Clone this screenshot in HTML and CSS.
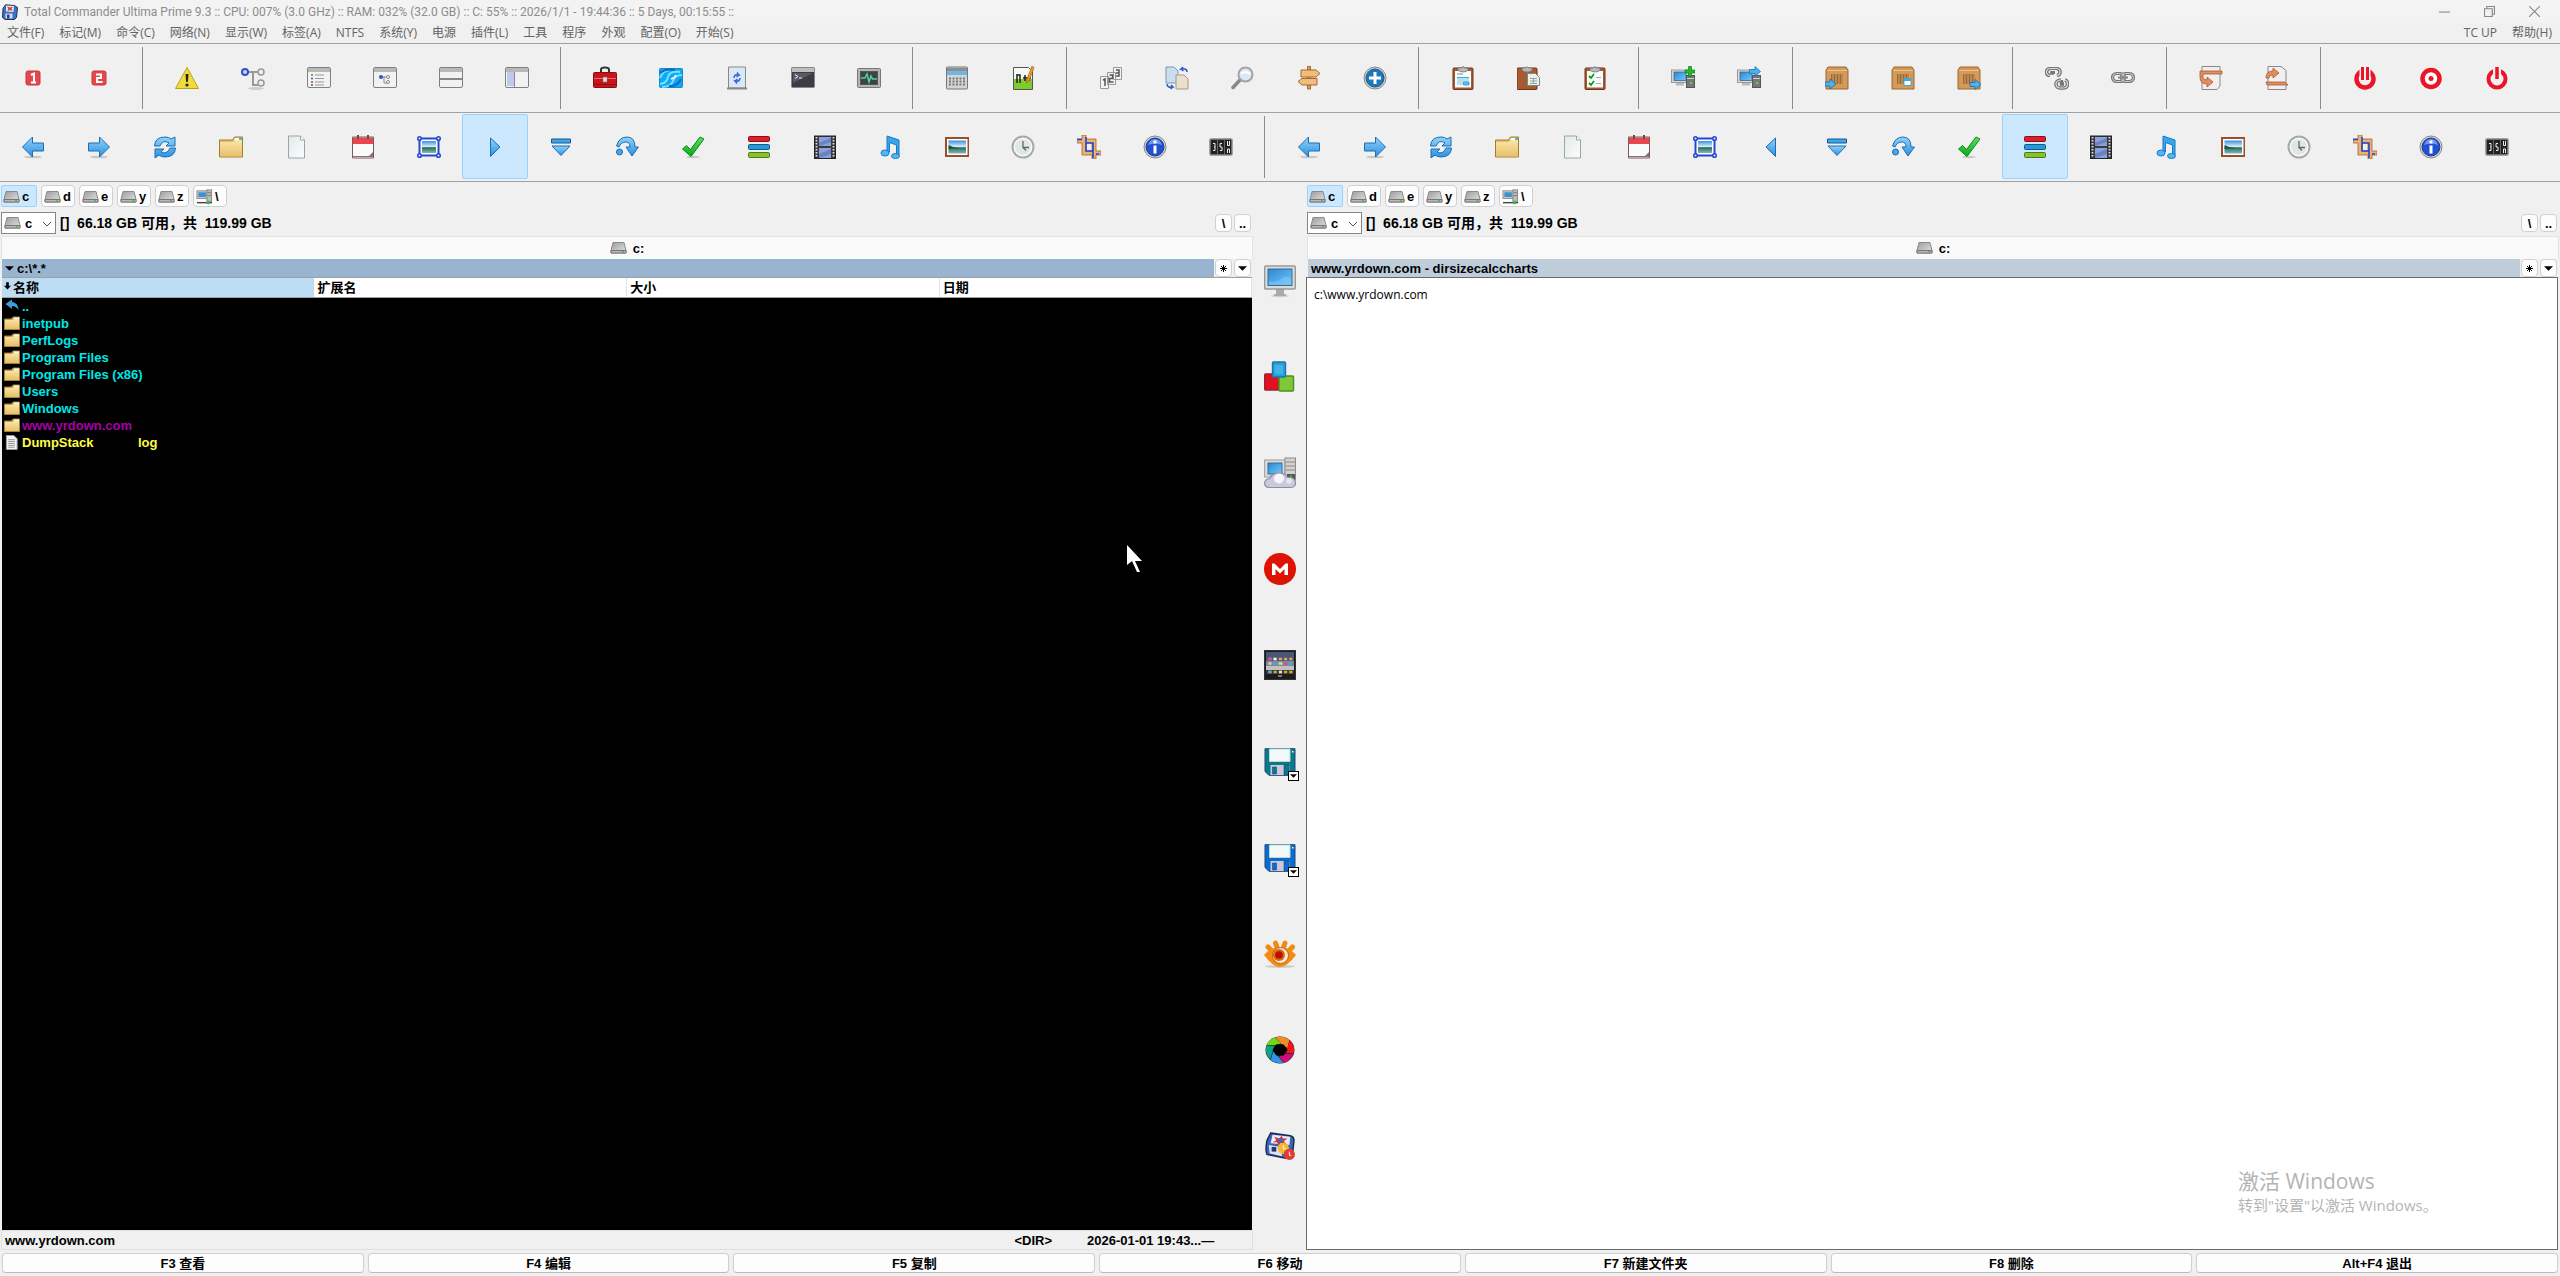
FILE: index.html
```html
<!DOCTYPE html>
<html lang="zh-CN">
<head>
<meta charset="utf-8">
<title>Total Commander Ultima Prime 9.3</title>
<link rel="stylesheet" href="styles.css">
</head>
<body>
<svg class="sprite" aria-hidden="true">
<defs>
<linearGradient id="gBlue" x1="0" y1="0" x2="0" y2="1"><stop offset="0" stop-color="#8fd4fb"/><stop offset="1" stop-color="#2b8fe0"/></linearGradient>
<linearGradient id="gFold" x1="0" y1="0" x2="0" y2="1"><stop offset="0" stop-color="#fbe6a8"/><stop offset="1" stop-color="#e6bf69"/></linearGradient>
<linearGradient id="gGray" x1="0" y1="0" x2="1" y2="1"><stop offset="0" stop-color="#9c9c9c"/><stop offset="1" stop-color="#e4e4e4"/></linearGradient>
<linearGradient id="gPaper" x1="0" y1="0" x2="1" y2="1"><stop offset="0" stop-color="#dfeaea"/><stop offset="1" stop-color="#fdfdfd"/></linearGradient>
<linearGradient id="gScreen" x1="0" y1="0" x2="1" y2="1"><stop offset="0" stop-color="#2f86c9"/><stop offset=".5" stop-color="#4da8e8"/><stop offset="1" stop-color="#7cc4f5"/></linearGradient>
<linearGradient id="gGreen" x1="0" y1="0" x2="0" y2="1"><stop offset="0" stop-color="#5be05f"/><stop offset="1" stop-color="#0ba716"/></linearGradient>
<linearGradient id="gPic" x1="0" y1="0" x2="0" y2="1"><stop offset="0" stop-color="#3c8fe0"/><stop offset=".5" stop-color="#e3f3fb"/><stop offset=".55" stop-color="#2b6b52"/><stop offset="1" stop-color="#7fb9c0"/></linearGradient>
</defs>
<symbol id="app" viewBox="0 0 16 16"><path d="M3.500.8l9 .7 3 2-1 10-2 2H3l-2.500-2 .5-9z" fill="#3d6fc4" stroke="#1c3568"/><path d="M4 1.500l8 .6-.5 6L4 7.500z" fill="#dfe6f4"/><path d="M5 2.500l3 1 3-.8-1.500 2L10.500 7 8 6 5.500 7l.8-2.200z" fill="#e03a2c"/><path d="M3.500 9.500h7v5h-7z" fill="#cfdcf2"/><path d="M5 10.500h2.500v4H5z" fill="#24427e"/></symbol>
<symbol id="one" viewBox="0 0 24 24"><rect x="5" y="5" width="14" height="14" rx="2" fill="#e4484c" stroke="#c93338"/><path d="M10 9l3-1.500v9M10 16.500h5" fill="none" stroke="#fff" stroke-width="2"/></symbol>
<symbol id="two" viewBox="0 0 24 24"><rect x="5" y="5" width="14" height="14" rx="2" fill="#e4484c" stroke="#c93338"/><path d="M9 8.500h5v3.500h-4v4h5.500" fill="none" stroke="#fff" stroke-width="2"/></symbol>
<symbol id="warn" viewBox="0 0 24 24"><path d="M12 1.500L23.500 22.500H.5z" fill="#f0dc38" stroke="#b9a21b"/><path d="M10.500 8h3l-.6 8h-1.800z" fill="#222"/><circle cx="12" cy="19" r="1.600" fill="#222"/></symbol>
<symbol id="tree" viewBox="0 0 24 24"><ellipse cx="15" cy="22.500" rx="8" ry="1.500" fill="#ccc"/><path d="M7 6h10M12 6v13h5" fill="none" stroke="#999" stroke-width="2"/><circle cx="4" cy="6" r="3" fill="#c9d5ff" stroke="#3452c0" stroke-width="2"/><circle cx="20" cy="6" r="3" fill="#eee" stroke="#999" stroke-width="1.500"/><circle cx="20" cy="17" r="3" fill="#eee" stroke="#999" stroke-width="1.500"/></symbol>
<symbol id="win" viewBox="0 0 24 24"><rect x=".5" y="1.500" width="23" height="20" rx="1.500" fill="#f2f2f2" stroke="#808080"/><rect x="1" y="2" width="22" height="4" fill="#b8b8b8"/></symbol>
<symbol id="wlist" viewBox="0 0 24 24"><use href="#win"/><path d="M8 9h9M8 12.500h9M8 16h9M8 19h9" stroke="#999"/><path d="M4 9h2" stroke="#3a9a3a" stroke-width="1.500"/><path d="M4 12.500h2" stroke="#3456c8" stroke-width="1.500"/><path d="M4 16h2" stroke="#c83434" stroke-width="1.500"/><path d="M4 19h2" stroke="#3456c8" stroke-width="1.500"/></symbol>
<symbol id="wtree" viewBox="0 0 24 24"><use href="#win"/><path d="M9 11h4M11 11v6h3" fill="none" stroke="#888"/><circle cx="8" cy="11" r="2" fill="#3452c0"/><circle cx="15" cy="11" r="1.500" fill="#fff" stroke="#888"/><circle cx="15" cy="16" r="1.500" fill="#fff" stroke="#888"/></symbol>
<symbol id="whor" viewBox="0 0 24 24"><use href="#win"/><path d="M1 13h22" stroke="#888" stroke-width="2"/></symbol>
<symbol id="wver" viewBox="0 0 24 24"><use href="#win"/><rect x="2" y="6" width="7" height="14" fill="#c0c9ea"/><path d="M9.500 6v15" stroke="#888"/></symbol>
<symbol id="toolbox" viewBox="0 0 24 24"><path d="M8 7V3.500Q8 1.500 12 1.500T16 3.500V7" fill="none" stroke="#333" stroke-width="2"/><rect x=".5" y="6.500" width="23" height="15" rx="1" fill="#c6161c" stroke="#8d0d12"/><path d="M1 12.500h22" stroke="#f26a6a"/><rect x="10" y="11" width="4" height="5" fill="#ddd" stroke="#777" stroke-width=".5"/><path d="M1 18.500h22" stroke="#8d0d12"/></symbol>
<symbol id="swirl" viewBox="0 0 24 24"><rect x=".5" y="2.500" width="23" height="19" rx="1" fill="#12a8f0" stroke="#1589c8"/><path d="M1 18Q8 17 9 11t12-5M3 21q9 0 11-6t9-6M1 12q2-7 10-8" fill="none" stroke="#70e4ff" stroke-width="2"/><path d="M12 13q4-1 5-4" fill="none" stroke="#fff" stroke-width="1.500"/><path d="M1 7Q7 2 16 4M10 20q8 1 12-7" fill="none" stroke="#0668d0" stroke-width="2"/></symbol>
<symbol id="sync" viewBox="0 0 24 24"><path d="M3.500 1h17v21h-17z" fill="#d8e8f6" stroke="#888"/><path d="M2 22.500h20" stroke="#888" stroke-width="2"/><path d="M9 12q0-4 5-3l-2-2.500M14 9l-2.500 2M15 12q0 4-5 3l2 2.500M10 15l2.500-2" fill="none" stroke="#3b64d8" stroke-width="1.500"/></symbol>
<symbol id="term" viewBox="0 0 24 24"><rect x=".5" y="1.500" width="23" height="20" rx="1" fill="#3c3c44" stroke="#888"/><rect x="1" y="2" width="22" height="4" fill="#bdbdbd"/><path d="M2 7h20L2 17z" fill="#5a5a66"/><path d="M4 8.500l3 2-3 2M8 12h3" fill="none" stroke="#eee"/></symbol>
<symbol id="mon" viewBox="0 0 24 24"><rect x=".5" y="2.500" width="23" height="19" rx="1" fill="#b5b5b5" stroke="#777"/><rect x="3.500" y="5.500" width="17" height="13" fill="#3a4440" stroke="#555"/><path d="M4 12h4l2-4 2 8 2-6 1.500 3H20" fill="none" stroke="#55d0a0" stroke-width="1.500"/></symbol>
<symbol id="calc" viewBox="0 0 24 24"><rect x="1.500" y="1" width="21" height="22" rx="1" fill="#d4d4d4" stroke="#777"/><path d="M2 2h20v3H2z" fill="#8e8e8e"/><path d="M2 5h20v4H2z" fill="#6cb8e4"/><path d="M4 12.500h17M4 15.500h17M4 18.500h17" stroke="#777" stroke-width="1.800" stroke-dasharray="2 1.500"/></symbol>
<symbol id="npp" viewBox="0 0 24 24"><path d="M2.500 1.500h15l4 4v18h-19z" fill="#f7faf2" stroke="#555"/><path d="M3 13h18v10H3z" fill="#7ecb2e"/><path d="M6 8v9M6 9h3v8M12 12h8M14 9v6M18 9v6" fill="none" stroke="#222" stroke-width="1.500"/><path d="M15.500 17l.5-4L21 0l2 1.500L18 15z" fill="#f0a228" stroke="#a05c10" stroke-width=".7"/></symbol>
<symbol id="nums" viewBox="0 0 24 24"><g fill="#f4f4f4" stroke="#999"><path d="M14.500 1.500h8v12h-8zM8.500 6.500h8v12h-8zM1.500 10.500h8v12h-8z"/></g><path d="M17 4h3v6h-3M17 7h3M10.500 9h3v3.500h-3V16h4M4 14l2-1v7" fill="none" stroke="#555" stroke-width="1.500"/></symbol>
<symbol id="swap" viewBox="0 0 24 24"><path d="M1 1h8l4 4v12H1z" fill="#c8def0" stroke="#8097ad"/><path d="M11 9h8l4 4v10H11z" fill="#e8dfcc" stroke="#a69980"/><path d="M22 6q0-4-6-3l2-2M16 3l2.500 2M2 18q0 4 6 3l-2-2M8 21l-2.500 2" fill="none" stroke="#3358d4" stroke-width="1.600"/></symbol>
<symbol id="mag" viewBox="0 0 24 24"><path d="M9 14L2 21.500" stroke="#888" stroke-width="3.500" stroke-linecap="round"/><circle cx="14.500" cy="8.500" r="7" fill="#d9e8f4" stroke="#a4a4a4" stroke-width="2"/><path d="M10 8q4-4 9 0" stroke="#fff" fill="none" stroke-width="2"/></symbol>
<symbol id="sign" viewBox="0 0 24 24"><path d="M10.500.5h3V23h-3z" fill="#d9a05e" stroke="#a46b2e"/><path d="M4 4h15l4 3.500L19 11H4zM20 12.500H5L1 15.500 5 19h15z" fill="#efbd7c" stroke="#a8692b"/></symbol>
<symbol id="plus" viewBox="0 0 24 24"><circle cx="12" cy="12" r="11" fill="#d0d0d0" stroke="#8a8a8a"/><circle cx="12" cy="12" r="9" fill="#1f78b8" stroke="#145a90"/><path d="M12 6v12M6 12h12" stroke="#fff" stroke-width="3"/></symbol>
<symbol id="clip" viewBox="0 0 24 24"><rect x="2" y="2" width="20" height="21.500" rx="1" fill="#a65a32" stroke="#6e3418"/><path d="M7 4V2h3q2-2.500 4 0h3v2q-1 2-5 2T7 4z" fill="#b9b9b9" stroke="#777" stroke-width=".8"/></symbol>
<symbol id="cliptab" viewBox="0 0 24 24"><use href="#clip"/><path d="M4 5h16v16.500H4z" fill="#f8fbfb"/><path d="M7 4V2h3q2-2.500 4 0h3v2q-1 2-5 2T7 4z" fill="#b9b9b9" stroke="#777" stroke-width=".8"/><path d="M6 8h6" stroke="#888"/><rect x="6" y="11" width="12" height="8" fill="#b9dff2"/><path d="M6 11.500h12M12.500 16h5.500v3h-5.500z" stroke="#38a8dc" fill="#64bce8"/></symbol>
<symbol id="clippaste" viewBox="0 0 24 24"><use href="#clip" x="-2"/><path d="M10.500 7.500h8l4 4v8h-12z" fill="#e7f0ee" stroke="#7c8a86"/><path d="M13 12.500h7M13 15h7M13 17.500h7M16.500 12v6" stroke="#8fa5a0"/></symbol>
<symbol id="clipcheck" viewBox="0 0 24 24"><use href="#clip"/><path d="M4 5h16v16.500H4z" fill="#f8fbfb"/><path d="M7 4V2h3q2-2.500 4 0h3v2q-1 2-5 2T7 4z" fill="#b9b9b9" stroke="#777" stroke-width=".8"/><path d="M6 10l2 2 3-4M6 17l2 2 3-4" fill="none" stroke="#0a9a16" stroke-width="1.800"/><path d="M13 11.500h5M13 17.500h5" stroke="#aaa"/></symbol>
<symbol id="pc" viewBox="0 0 24 24"><rect x=".5" y="4" width="17" height="12.500" fill="#d8d8d8" stroke="#999"/><rect x="3" y="6" width="12" height="8.500" fill="url(#gScreen)" stroke="#2a5d8c" stroke-width=".7"/><path d="M5 17h8v2.500H5z" fill="#bbb"/><rect x="15.500" y="9.500" width="8" height="12" fill="#777" stroke="#555"/><path d="M16 12.500h7" stroke="#ccc"/><circle cx="20" cy="17" r="1" fill="#4f4"/></symbol>
<symbol id="pcadd" viewBox="0 0 24 24"><use href="#pc"/><path d="M17.500.5h3v3.500H24v3h-3.500v3.500h-3V7H14V4h3.500z" fill="#22b82c" stroke="#0c8517" stroke-width=".7"/></symbol>
<symbol id="pcgo" viewBox="0 0 24 24"><use href="#pc"/><path d="M12.500 3.500h5.500V.5l5.500 5-5.500 5v-3h-5.500z" fill="#4cb0f0" stroke="#1f72b4" stroke-width=".8"/></symbol>
<symbol id="crate" viewBox="0 0 24 24"><path d="M3 1h18l2 3v19H1V4z" fill="#d39a58" stroke="#9a6530"/><path d="M2 4.500h20" stroke="#ecc18c"/><path d="M6 8h12v10H6z" fill="#9c6a38"/><path d="M8 8v10M11 8v10M14 8v10M17 8v10" stroke="#d8a566"/></symbol>
<symbol id="cratein" viewBox="0 0 24 24"><use href="#crate"/><path d="M0 16h5v-3l6 5-6 5v-3H0z" fill="#4ab4f2" stroke="#1a6aae" stroke-width=".8"/></symbol>
<symbol id="cratetab" viewBox="0 0 24 24"><use href="#crate"/><rect x="13" y="12.500" width="7" height="7" fill="#fff" stroke="#44a8dc"/><path d="M13 14h7" stroke="#44a8dc" stroke-width="2"/></symbol>
<symbol id="crateout" viewBox="0 0 24 24"><use href="#crate"/><path d="M13 16.500h5v-3l6 5-6 5v-3h-5z" fill="#4ab4f2" stroke="#1a6aae" stroke-width=".8"/></symbol>
<symbol id="unlink" viewBox="0 0 24 24"><path id="lnk" d="M5 9.500Q1.500 9 1.500 6T5 2.500h6.500q3.500.5 3.500 3.500t-3 3.500M7 8.500V6.500h3M16 14q-5 .5-5 4t4 4h4q3.500-.5 3.500-4T20 14M16.500 14v4H19" fill="none" stroke="#747474" stroke-width="3.200"/><use href="#lnk"/><path d="M5 9.500Q1.500 9 1.500 6T5 2.500h6.500q3.500.5 3.500 3.500t-3 3.500M16 14q-5 .5-5 4t4 4h4q3.500-.5 3.500-4T20 14" fill="none" stroke="#dcdcdc" stroke-width="1.200"/></symbol>
<symbol id="link" viewBox="0 0 24 24"><rect x="1.500" y="7.500" width="12" height="8" rx="4" fill="none" stroke="#747474" stroke-width="3.200"/><rect x="10.500" y="7.500" width="12" height="8" rx="4" fill="none" stroke="#747474" stroke-width="3.200"/><rect x="1.500" y="7.500" width="12" height="8" rx="4" fill="none" stroke="#d4d4d4"/><rect x="10.500" y="7.500" width="12" height="8" rx="4" fill="none" stroke="#d4d4d4"/><path d="M7 11.500h10" stroke="#888" stroke-width="2"/></symbol>
<symbol id="docdown" viewBox="0 0 24 24"><path d="M3 .5h18V20l-3 3.500H3z" fill="#f2eff2" stroke="#888"/><path d="M1 5h22v3H4v3q0 3 4 3v-3l6 5-6 5v-3q-7 0-7-7z" fill="#e0905c" stroke="#a85a2c" stroke-width=".8"/></symbol>
<symbol id="docup" viewBox="0 0 24 24"><path d="M3 .5h13l5 4V23.500H3z" fill="#f2eff2" stroke="#888"/><path d="M1 12q0-7 7-7V2l6 5-6 5V9q-4 0-4 3zM1 16h19l3 3H2z" fill="#e0905c" stroke="#a85a2c" stroke-width=".8"/></symbol>
<symbol id="pause" viewBox="0 0 24 24"><circle cx="12" cy="13" r="8.500" fill="none" stroke="#ea1526" stroke-width="4.500"/><path d="M6.500 1h11v14h-11z" fill="#f0f0f0"/><path d="M9.500 1v13M14.500 1v13" stroke="#ea1526" stroke-width="3"/></symbol>
<symbol id="rec" viewBox="0 0 24 24"><circle cx="12" cy="12.500" r="8.500" fill="#fff" stroke="#ea1526" stroke-width="4.500"/><circle cx="12" cy="12.500" r="2.500" fill="#ea1526"/></symbol>
<symbol id="power" viewBox="0 0 24 24"><circle cx="12" cy="13" r="8.500" fill="none" stroke="#ea1526" stroke-width="4"/><path d="M8 1h8v12H8z" fill="#f0f0f0"/><path d="M12 1v12" stroke="#ea1526" stroke-width="3.500"/></symbol>
<symbol id="left" viewBox="0 0 24 24"><ellipse cx="12" cy="22" rx="9" ry="1.300" fill="#c8c8c8"/><path d="M1.500 12L11.500 2v6h11v8h-11v6z" fill="url(#gBlue)" stroke="#1d6cb4"/></symbol>
<symbol id="right" viewBox="0 0 24 24"><ellipse cx="12" cy="22" rx="9" ry="1.300" fill="#c8c8c8"/><path d="M22.500 12L12.500 2v6h-11v8h11v6z" fill="url(#gBlue)" stroke="#1d6cb4"/></symbol>
<symbol id="refresh" viewBox="0 0 24 24"><path d="M1.500 11Q2 2 12 2q4 0 6 2l4-2v9h-9l3-3q-6-4-9 3zM22.500 13Q22 22 12 22q-4 0-6-2l-4 3v-9h9l-3 3q6 3 9-4z" fill="url(#gBlue)" stroke="#1d6cb4"/></symbol>
<symbol id="folder" viewBox="0 0 24 24"><path d="M.5 5h13l2-3h8v20H.5z" fill="#e3bd6c" stroke="#a57d30"/><path d="M16 3h7v2h-8z" fill="#fff"/><path d="M20 3h3v2h-3z" fill="#45b4ee"/><path d="M1 7h13l2-2h7v16.500H1z" fill="url(#gFold)"/></symbol>
<symbol id="file" viewBox="0 0 24 24"><path d="M3.500 1h12l4 4v18h-16z" fill="url(#gPaper)" stroke="#9aa6a6"/><path d="M15.500 1v4h4" fill="#fff" stroke="#9aa6a6"/></symbol>
<symbol id="cal" viewBox="0 0 24 24"><path d="M1.500 2h21v21h-21z" fill="#fafafa" stroke="#7c5a5a"/><path d="M2 2.500h20V9H2z" fill="#e8474d"/><path d="M7 0v4M17 0v4" stroke="#555" stroke-width="2"/><path d="M2 22h20v-5l-4 4H2z" fill="#8c6f72"/></symbol>
<symbol id="sel" viewBox="0 0 24 24"><rect x="2.500" y="3.500" width="19" height="17" fill="#fff" stroke="#2447cc" stroke-width="2"/><rect x="5" y="6" width="14" height="12" fill="url(#gPic)"/><g fill="#dfe6ff" stroke="#2447cc" stroke-width="1.500"><circle cx="2.500" cy="3.500" r="1.800"/><circle cx="21.500" cy="3.500" r="1.800"/><circle cx="2.500" cy="20.500" r="1.800"/><circle cx="21.500" cy="20.500" r="1.800"/></g></symbol>
<symbol id="play" viewBox="0 0 24 24"><path d="M7.500 3L17 12 7.500 21.500z" fill="url(#gBlue)" stroke="#1d6cb4"/></symbol>
<symbol id="back" viewBox="0 0 24 24"><path d="M16.500 3L7 12l9.500 9.500z" fill="url(#gBlue)" stroke="#1d6cb4"/></symbol>
<symbol id="down" viewBox="0 0 24 24"><path d="M2.500 4h19v4h-19z" fill="#3aa6ec" stroke="#1b568e"/><path d="M3 11h18l-9 9.500z" fill="url(#gBlue)" stroke="#1d6cb4"/></symbol>
<symbol id="jump" viewBox="0 0 24 24"><path d="M1.500 11Q4 2 12 2t8 10h3.500L17 21l-6-9h4q0-5-4-5-5 0-7 5z" fill="url(#gBlue)" stroke="#1d6cb4"/><circle cx="4.500" cy="17" r="3" fill="#45a8ec" stroke="#1d6cb4"/></symbol>
<symbol id="check" viewBox="0 0 24 24"><ellipse cx="12" cy="22" rx="7" ry="1.200" fill="#c8c8c8"/><path d="M1.500 14l4-3.500 4 4L19 2l4 2L10 21.500z" fill="url(#gGreen)" stroke="#0b8a14"/></symbol>
<symbol id="bars" viewBox="0 0 24 24"><rect x="1.500" y="1.500" width="21" height="5" rx="1" fill="#dd1f2d" stroke="#8d1017"/><rect x="1.500" y="9.500" width="21" height="5" rx="1" fill="#249bd8" stroke="#125d8c"/><rect x="1.500" y="17.500" width="21" height="5" rx="1" fill="#86c12e" stroke="#4c7a14"/></symbol>
<symbol id="film" viewBox="0 0 24 24"><rect x="1.500" y="1" width="21" height="22.500" fill="#3a3a3e" stroke="#222"/><path d="M3.500 2v21M20.500 2v21" stroke="#ddd" stroke-width="1.800" stroke-dasharray="1.500 1.500"/><path d="M6 2h12v9H6zM6 13h12v10H6z" fill="#8aa0d8"/><path d="M6 8l12-5v4L6 11zM6 19l12-5v5L6 23z" fill="#6a82c2"/></symbol>
<symbol id="note" viewBox="0 0 24 24"><path d="M8 1l12 4v15h-2.500V10L10.500 7.500V17H8z" fill="#35a5ee" stroke="#1b79c0"/><ellipse cx="6" cy="18" rx="4" ry="3" fill="#4fb8f6" stroke="#1b79c0"/><ellipse cx="16.500" cy="21" rx="4" ry="2.500" fill="#4fb8f6" stroke="#1b79c0"/></symbol>
<symbol id="pic" viewBox="0 0 24 24"><rect x="1" y="3" width="22.500" height="18" fill="#fff" stroke="#984f2c" stroke-width="2"/><rect x="3.500" y="5.500" width="17.500" height="13" fill="url(#gPic)"/><path d="M3.500 10q5 3 11 3l-11 1z" fill="#19553e"/></symbol>
<symbol id="clock" viewBox="0 0 24 24"><circle cx="12" cy="12" r="10.500" fill="#f0f4f1" stroke="#a9a9a9" stroke-width="2"/><circle cx="12" cy="12" r="8.500" fill="#dde8e2" stroke="#fff"/><path d="M12 6v6.500h6M12 12.500l3 3" fill="none" stroke="#666" stroke-width="1.300"/></symbol>
<symbol id="crop" viewBox="0 0 24 24"><path fill-rule="evenodd" d="M5 0h4v4h10v12h5v4h-5v4h-4v-4H5V8H0V4h5zM9 8v8h6V8z" fill="#eeb06c" stroke="#a3662c" stroke-width=".8"/><path d="M9 2v14h7V8H9M0 4.500h5M16 15v8M22 19h-3" fill="none" stroke="#1e48d8" stroke-width="1.600"/></symbol>
<symbol id="info" viewBox="0 0 24 24"><circle cx="12" cy="12" r="11" fill="#d9d9d9" stroke="#888"/><circle cx="12" cy="12" r="9" fill="#2250d0" stroke="#163a9c"/><path d="M5 10q2-6 7-6t7 6q-7-3-14 0z" fill="#7397ee"/><path d="M12 5.500v3M12 10.500v8" stroke="#fff" stroke-width="3"/></symbol>
<symbol id="count" viewBox="0 0 24 24"><rect x="1" y="4" width="22" height="16" rx="1" fill="#222" stroke="#8a8a8a" stroke-width="1.500"/><path d="M8.500 5v14M15.500 5v14" stroke="#666"/><path d="M4 8.500h2v7H4M5 12h1M13 8.500h-2V12h2v3.500h-2M18.500 6v4.500h2V6M18.500 18v-4h2v4" fill="none" stroke="#eee"/></symbol>
<symbol id="drive" viewBox="0 0 17 12"><path d="M3 .5h11l2 8v2.500H1V8.500z" fill="url(#gGray)" stroke="#8a8a8a"/><path d="M1 8.500h15v2.500H1z" fill="#b9b9b9" stroke="#767676"/><path d="M12 9.700h2" stroke="#3ec43e" stroke-width="1.500"/></symbol>
<symbol id="netdrive" viewBox="0 0 18 16"><rect x="1" y="1.500" width="11" height="8" fill="#cfcfcf" stroke="#888"/><rect x="2.500" y="3" width="8" height="5" fill="#3d90d2"/><rect x="11.500" y=".5" width="5" height="12" fill="#bdbdbd" stroke="#888"/><path d="M12 3.500h4M12 6.500h4" stroke="#777"/><path d="M1 14h16" stroke="#444" stroke-width="1.500"/><circle cx="13" cy="14" r="1.800" fill="#27c23a"/></symbol>
<symbol id="updir" viewBox="0 0 14 12"><path d="M.5 5L7 .5V3q6 .5 6.500 8Q11 7 7 7v3z" fill="#3aa0e4"/></symbol>
<symbol id="sfold" viewBox="0 0 16 14"><path d="M.5 2.500h7L9 .5h6.500v12.500H.5z" fill="#dcb462" stroke="#a88038"/><path d="M10 1h5v2h-5z" fill="#f5f8fa"/><path d="M1 3.500h8l1-1h5v10H1z" fill="url(#gFold)"/></symbol>
<symbol id="stext" viewBox="0 0 16 16"><path d="M2 .5h8L13.500 4v11.500H2z" fill="#f4f4f4" stroke="#999"/><path d="M4 5h7M4 7h7M4 9h7M4 11h7M4 13h7" stroke="#777" stroke-width=".8"/></symbol>
<symbol id="display" viewBox="0 0 32 32"><ellipse cx="16" cy="31" rx="9" ry="1" fill="#ccc"/><path d="M12 24h8v5h2v2H10v-2h2z" fill="#aaa"/><rect x=".7" y="1" width="30.600" height="23" rx="1" fill="#dcdcdc" stroke="#999" stroke-width="1.400"/><rect x="4" y="4" width="24" height="16.500" fill="url(#gScreen)" stroke="#2e6d9e"/><path d="M5 16q8 2 12-2t10-1v7H5z" fill="#82c6f4" opacity=".6"/></symbol>
<symbol id="cubes" viewBox="0 0 32 32"><rect x=".7" y="13" width="14.500" height="16" rx="1" fill="#e01022" stroke="#a02028" stroke-width="1.400"/><rect x="15" y="15" width="14.500" height="15" rx="1" fill="#80c838" stroke="#4c8c1c" stroke-width="1.400"/><rect x="8.500" y="1" width="13" height="15" rx="1" fill="#2aa0d8" stroke="#1b76a6" stroke-width="1.400"/><path d="M11 4h8v9h-8z" fill="#3fb4e8"/></symbol>
<symbol id="cloudpc" viewBox="0 0 32 32"><rect x="21" y="1" width="10.500" height="22" fill="#d2d2d2" stroke="#8a8a8a"/><path d="M22 5h9M22 9h9M22 13h9" stroke="#888"/><path d="M23 17h8v7h-8z" fill="#555"/><circle cx="27" cy="19" r="1" fill="#2d2"/><rect x=".7" y="3" width="20" height="17" fill="#ddd" stroke="#999"/><rect x="4" y="6" width="14" height="11" fill="url(#gScreen)" stroke="#2e6d9e"/><path d="M5 30.500C-1 30.500-1 22 6 21.500C7 15 21 14 23.500 20.500C33 19 34 30.500 27 30.500z" fill="#c9c9dc" stroke="#8c8ca8" stroke-width="1.200"/><circle cx="15" cy="21.500" r="5" fill="#f6f6fa"/><circle cx="25" cy="24" r="3" fill="#e4e4ee"/></symbol>
<symbol id="mega" viewBox="0 0 32 32"><circle cx="16" cy="16" r="16" fill="#dd1405"/><path d="M8 22V10.500h2.500l5.500 5.500 5.500-5.500H24V22h-3.500v-6L16 20.500 11.500 16v6z" fill="#fff"/></symbol>
<symbol id="tablet" viewBox="0 0 32 30"><rect x=".5" y=".5" width="31" height="29" fill="#1b1b1d" stroke="#333"/><path d="M2 2h28v12H2z" fill="#4a5877"/><path d="M2 11h28v6H2z" fill="#7c88a2"/><path d="M2 16h28v4H2z" fill="#c4c0be"/><path d="M2 20h28v4H2z" fill="#3a3840"/><g stroke-width="2.500"><path d="M4.500 9h24" stroke="#e8a848" stroke-dasharray="3 2.200"/><path d="M4.500 9h3M20 13.500h3" stroke="#e040b0"/><path d="M9.500 9h3" stroke="#f4f4f4"/><path d="M4.500 13.500h3M14.500 13.500h4" stroke="#e8d488"/><path d="M9.500 13.500h3M25 13.500h3" stroke="#48a8d8"/><path d="M4.500 22h24" stroke="#d8b020" stroke-dasharray="3 2.200"/><path d="M4.500 22h3" stroke="#48a8e8"/><path d="M15 22h3" stroke="#d8e8d0"/></g><path d="M14 26h4" stroke="#777" stroke-width="2"/></symbol>
<symbol id="flop" viewBox="0 0 32 28"><path d="M1 .7h30v26.600H5L1 23.500z" fill="currentColor" stroke="#20467c"/><path d="M5.500 1h20.500v12.500h-20.500z" fill="#f2f8f8" stroke="#b8dcd0"/><path d="M6.500 17h19v10h-19z" fill="#c9c9da"/><path d="M8.500 19h4v7h-4zM20 17h5v10h-5z" fill="currentColor" stroke="#20467c" stroke-width=".6"/><path d="M28 3h1.500v1.500H28z" fill="#fff"/></symbol>
<symbol id="eye" viewBox="0 0 32 28"><ellipse cx="16" cy="26.500" rx="15" ry="1.500" fill="#ccc"/><path d="M4 7l5 5M11.500 3l2 6M21 3l-2 6M28.500 7l-5 5" stroke="#f08a10" stroke-width="5" stroke-linecap="round"/><path d="M0 15l3-3q13-10 26 0l3 3Q23 27 16 27T0 15z" fill="#f28c12"/><circle cx="16.500" cy="15.500" r="8" fill="#f7e8dd" stroke="#c85c0c"/><circle cx="15" cy="15" r="6" fill="#e0680e"/><circle cx="15" cy="15" r="3.800" fill="#b81206"/></symbol>
<symbol id="shutter" viewBox="0 0 32 30"><ellipse cx="16" cy="15" rx="15.500" ry="14.500" fill="#222"/><path d="M11 1.500Q19-1 26 4L24 13 17 8z" fill="#f08a2c"/><path d="M26.500 4.500Q33 11 30.500 19L22 18 24 12z" fill="#f01818"/><path d="M30.300 19.500Q27 27 20 29L15 22 22 19z" fill="#cc0e7c"/><path d="M19.500 29Q11 30 6 25.500L9 16 15 23z" fill="#2e96e8"/><path d="M5.500 25Q-1 18 1.500 10.500L10 11 8 17z" fill="#12a088"/><path d="M1.700 10Q4 4 10.500 1.500L17 8 10 10z" fill="#72d818"/><path d="M12 9h8l4 6-4 6h-8l-4-6z" fill="#000"/></symbol>
<symbol id="tcup" viewBox="0 0 32 30"><path d="M6 1l21 3q4 1 4 5l-2 19-8 0L2 24Q0 20 2 9z" fill="#3b63b8" stroke="#18284c" stroke-width="1.500"/><path d="M8 3l19 2-1 9-20-2z" fill="#e6ecf8"/><path d="M10 5l5 2 3-3 1 3 5 0-4 3 3 3-6-1-3 2-1-3-5 0 4-2z" fill="#e03022"/><path d="M14 7h5v4h-5z" fill="#2d6ad8"/><path d="M4 14l14 2v10L5 23z" fill="#dbe4f4"/><path d="M7 16h5v5H7z" fill="#24386c"/><circle cx="19.500" cy="17.500" r="6" fill="#f8b62c"/><circle cx="26" cy="24" r="6" fill="#e23a34"/><path d="M19.500 14v4h3M26 21v4h2" fill="none" stroke="#fff"/></symbol>
<symbol id="chev" viewBox="0 0 10 6"><path d="M1 1l4 4 4-4" fill="none" stroke="#555"/></symbol>
<symbol id="tri" viewBox="0 0 10 5"><path d="M0 0h10L5 5z"/></symbol>
<symbol id="star" viewBox="0 0 9 9"><path d="M4.500 1v7M1 4.500h7M2 2l5 5M7 2L2 7" stroke="#000"/></symbol>
<symbol id="sort" viewBox="0 0 8 10"><path d="M2.500 0h3v4H8L4 8.500 0 4h2.500z"/></symbol>
<symbol id="mouse" viewBox="0 0 16 28"><path d="M0 0v20l5-4 5 11h3L8 16h7z" fill="#fff"/></symbol>
</svg>

<header class="titlebar">
  <svg class="appicon"><use href="#app"/></svg>
  <span class="caption">Total Commander Ultima Prime 9.3 :: CPU: 007% (3.0 GHz) :: RAM: 032% (32.0 GB) :: C: 55% :: 2026/1/1 - 19:44:36 :: 5 Days, 00:15:55 ::</span>
  <div class="winbtns">
    <button aria-label="最小化"><svg viewBox="0 0 10 10"><path d="M0 5.500h10" stroke="#888"/></svg></button>
    <button aria-label="还原"><svg viewBox="0 0 10 10"><path d="M.5 2.500h7v7h-7zM2.500 2V.5h7v7H8" fill="none" stroke="#888"/></svg></button>
    <button aria-label="关闭"><svg viewBox="0 0 10 10"><path d="M0 0l10 10M10 0L0 10" stroke="#888"/></svg></button>
  </div>
</header>

<nav class="menubar">
  <button>文件(F)</button><button>标记(M)</button><button>命令(C)</button><button>网络(N)</button><button>显示(W)</button><button>标签(A)</button><button>NTFS</button><button>系统(Y)</button><button>电源</button><button>插件(L)</button><button>工具</button><button>程序</button><button>外观</button><button>配置(O)</button><button>开始(S)</button>
  <button class="push">TC UP</button><button>帮助(H)</button>
</nav>

<div class="toolbar">
  <button><svg><use href="#one"/></svg></button><button><svg><use href="#two"/></svg></button>
  <i></i>
  <button><svg><use href="#warn"/></svg></button><button><svg><use href="#tree"/></svg></button><button><svg><use href="#wlist"/></svg></button><button><svg><use href="#wtree"/></svg></button><button><svg><use href="#whor"/></svg></button><button><svg><use href="#wver"/></svg></button>
  <i></i>
  <button><svg><use href="#toolbox"/></svg></button><button><svg><use href="#swirl"/></svg></button><button><svg><use href="#sync"/></svg></button><button><svg><use href="#term"/></svg></button><button><svg><use href="#mon"/></svg></button>
  <i></i>
  <button><svg><use href="#calc"/></svg></button><button><svg><use href="#npp"/></svg></button>
  <i></i>
  <button><svg><use href="#nums"/></svg></button><button><svg><use href="#swap"/></svg></button><button><svg><use href="#mag"/></svg></button><button><svg><use href="#sign"/></svg></button><button><svg><use href="#plus"/></svg></button>
  <i></i>
  <button><svg><use href="#cliptab"/></svg></button><button><svg><use href="#clippaste"/></svg></button><button><svg><use href="#clipcheck"/></svg></button>
  <i></i>
  <button><svg><use href="#pcadd"/></svg></button><button><svg><use href="#pcgo"/></svg></button>
  <i></i>
  <button><svg><use href="#cratein"/></svg></button><button><svg><use href="#cratetab"/></svg></button><button><svg><use href="#crateout"/></svg></button>
  <i></i>
  <button><svg><use href="#unlink"/></svg></button><button><svg><use href="#link"/></svg></button>
  <i></i>
  <button><svg><use href="#docdown"/></svg></button><button><svg><use href="#docup"/></svg></button>
  <i></i>
  <button><svg><use href="#pause"/></svg></button><button><svg><use href="#rec"/></svg></button><button><svg><use href="#power"/></svg></button>
</div>

<div class="toolbar">
  <button><svg><use href="#left"/></svg></button><button><svg><use href="#right"/></svg></button><button><svg><use href="#refresh"/></svg></button><button><svg><use href="#folder"/></svg></button><button><svg><use href="#file"/></svg></button><button><svg><use href="#cal"/></svg></button><button><svg><use href="#sel"/></svg></button><button class="on"><svg><use href="#play"/></svg></button><button><svg><use href="#down"/></svg></button><button><svg><use href="#jump"/></svg></button><button><svg><use href="#check"/></svg></button><button><svg><use href="#bars"/></svg></button><button><svg><use href="#film"/></svg></button><button><svg><use href="#note"/></svg></button><button><svg><use href="#pic"/></svg></button><button><svg><use href="#clock"/></svg></button><button><svg><use href="#crop"/></svg></button><button><svg><use href="#info"/></svg></button><button><svg><use href="#count"/></svg></button>
  <i></i>
  <button><svg><use href="#left"/></svg></button><button><svg><use href="#right"/></svg></button><button><svg><use href="#refresh"/></svg></button><button><svg><use href="#folder"/></svg></button><button><svg><use href="#file"/></svg></button><button><svg><use href="#cal"/></svg></button><button><svg><use href="#sel"/></svg></button><button><svg><use href="#back"/></svg></button><button><svg><use href="#down"/></svg></button><button><svg><use href="#jump"/></svg></button><button><svg><use href="#check"/></svg></button><button class="on"><svg><use href="#bars"/></svg></button><button><svg><use href="#film"/></svg></button><button><svg><use href="#note"/></svg></button><button><svg><use href="#pic"/></svg></button><button><svg><use href="#clock"/></svg></button><button><svg><use href="#crop"/></svg></button><button><svg><use href="#info"/></svg></button><button><svg><use href="#count"/></svg></button>
</div>

<main class="main">
  <section class="panel">
    <div class="drives">
      <button class="on"><svg><use href="#drive"/></svg>c</button><button><svg><use href="#drive"/></svg>d</button><button><svg><use href="#drive"/></svg>e</button><button><svg><use href="#drive"/></svg>y</button><button><svg><use href="#drive"/></svg>z</button><button><svg class="net"><use href="#netdrive"/></svg>\</button>
    </div>
    <div class="inforow">
      <div class="combo"><svg class="drv"><use href="#drive"/></svg><select aria-label="左侧驱动器"><option>c</option></select><svg class="chev"><use href="#chev"/></svg></div>
      <span class="free">[]&nbsp; 66.18 GB 可用，共&nbsp; 119.99 GB</span>
      <div class="minis"><button>\</button><button>..</button></div>
    </div>
    <div class="tabs"><svg class="drv"><use href="#drive"/></svg>c:</div>
    <div class="pathrow">
      <div class="path active"><svg class="tri"><use href="#tri"/></svg>c:\*.*</div>
      <div class="minis"><button aria-label="收藏"><svg class="star"><use href="#star"/></svg></button><button aria-label="历史"><svg class="tri"><use href="#tri"/></svg></button></div>
    </div>
    <div class="list">
      <table>
        <thead><tr><th class="sorted"><svg><use href="#sort"/></svg>名称</th><th>扩展名</th><th>大小</th><th>日期</th></tr></thead>
        <tbody>
          <tr><td colspan="4"><svg class="up"><use href="#updir"/></svg>..</td></tr>
          <tr><td colspan="4"><svg><use href="#sfold"/></svg>inetpub</td></tr>
          <tr><td colspan="4"><svg><use href="#sfold"/></svg>PerfLogs</td></tr>
          <tr><td colspan="4"><svg><use href="#sfold"/></svg>Program Files</td></tr>
          <tr><td colspan="4"><svg><use href="#sfold"/></svg>Program Files (x86)</td></tr>
          <tr><td colspan="4"><svg><use href="#sfold"/></svg>Users</td></tr>
          <tr><td colspan="4"><svg><use href="#sfold"/></svg>Windows</td></tr>
          <tr class="marked"><td colspan="4"><svg><use href="#sfold"/></svg>www.yrdown.com</td></tr>
          <tr class="log"><td colspan="4"><svg><use href="#stext"/></svg><span class="stem">DumpStack</span>log</td></tr>
        </tbody>
      </table>
      <svg class="mouse"><use href="#mouse"/></svg>
    </div>
    <div class="status"><span>www.yrdown.com</span><span class="dir">&lt;DIR&gt;</span><span class="date">2026-01-01 19:43...—</span></div>
  </section>

  <nav class="vbar">
    <button><svg><use href="#display"/></svg></button>
    <button><svg><use href="#cubes"/></svg></button>
    <button><svg><use href="#cloudpc"/></svg></button>
    <button><svg><use href="#mega"/></svg></button>
    <button><svg><use href="#tablet"/></svg></button>
    <button class="teal"><svg class="short"><use href="#flop"/></svg><span class="drop"><svg><use href="#tri"/></svg></span></button>
    <button class="blue"><svg class="short"><use href="#flop"/></svg><span class="drop"><svg><use href="#tri"/></svg></span></button>
    <button><svg class="short"><use href="#eye"/></svg></button>
    <button><svg class="short"><use href="#shutter"/></svg></button>
    <button><svg class="short"><use href="#tcup"/></svg></button>
  </nav>

  <section class="panel">
    <div class="drives">
      <button class="on"><svg><use href="#drive"/></svg>c</button><button><svg><use href="#drive"/></svg>d</button><button><svg><use href="#drive"/></svg>e</button><button><svg><use href="#drive"/></svg>y</button><button><svg><use href="#drive"/></svg>z</button><button><svg class="net"><use href="#netdrive"/></svg>\</button>
    </div>
    <div class="inforow">
      <div class="combo"><svg class="drv"><use href="#drive"/></svg><select aria-label="右侧驱动器"><option>c</option></select><svg class="chev"><use href="#chev"/></svg></div>
      <span class="free">[]&nbsp; 66.18 GB 可用，共&nbsp; 119.99 GB</span>
      <div class="minis"><button>\</button><button>..</button></div>
    </div>
    <div class="tabs"><svg class="drv"><use href="#drive"/></svg>c:</div>
    <div class="pathrow">
      <div class="path">www.yrdown.com - dirsizecalccharts</div>
      <div class="minis"><button aria-label="收藏"><svg class="star"><use href="#star"/></svg></button><button aria-label="历史"><svg class="tri"><use href="#tri"/></svg></button></div>
    </div>
    <div class="viewer">
      <p class="target">c:\www.yrdown.com</p>
      <div class="activate"><p class="big">激活 Windows</p><p>转到"设置"以激活 Windows。</p></div>
    </div>
  </section>
</main>

<footer class="fkeys">
  <button>F3 查看</button><button>F4 编辑</button><button>F5 复制</button><button>F6 移动</button><button>F7 新建文件夹</button><button>F8 删除</button><button>Alt+F4 退出</button>
</footer>
</body>
</html>
```
FILE: styles.css
```css
* { box-sizing: border-box; }

body {
  margin: 0;
  min-height: 100vh;
  display: flex;
  flex-direction: column;
  background: #f0f0f0;
  color: #000;
  font: bold 13px/17px "Liberation Sans", "Noto Sans CJK SC", sans-serif;
}

button {
  border: 0;
  padding: 0;
  background: none;
  color: inherit;
  font: inherit;
}

p { margin: 0; }
svg { display: block; flex: none; }
.sprite { position: absolute; width: 0; height: 0; }

/* title bar and menu */
.titlebar {
  display: flex;
  align-items: center;
  height: 23px;
  padding: 0 3px 0 2px;
  background: #f3f3f3;
  color: #8c8c8c;
  font: 12px/18px Roboto, "Noto Sans", sans-serif;
}
.appicon { width: 16px; height: 16px; margin-right: 6px; }
.winbtns { display: flex; margin-left: auto; }
.winbtns button { width: 45px; height: 23px; display: grid; place-items: center; }
.winbtns svg { width: 11px; height: 11px; }

.menubar {
  display: flex;
  height: 21px;
  border-bottom: 1px solid #a0a0a0;
  color: #636363;
  font: 12px/20px "Open Sans", "Noto Sans CJK SC", sans-serif;
}
.menubar button { padding: 0 8px 0 7px; }
.menubar .push { margin-left: auto; }

/* button bars */
.toolbar {
  display: flex;
  height: 69px;
  border-bottom: 1px solid #a0a0a0;
}
.toolbar button {
  flex: 0 0 66px;
  display: grid;
  place-items: center;
  margin: 1px 0 2px;
  border: 1px solid transparent;
  border-radius: 2px;
}
.toolbar button.on { background: #cce8ff; border-color: #99d1ff; }
.toolbar svg { width: 24px; height: 24px; }
.toolbar i {
  flex: 0 0 22px;
  margin: 3px 0;
  background: linear-gradient(#8c8c8c, #8c8c8c) 10px 0 / 1px 100% no-repeat;
}

/* file panels */
.main {
  flex: 1;
  display: grid;
  grid-template-columns: minmax(0, 1fr) 52px minmax(0, 1fr);
}
.panel { display: flex; flex-direction: column; padding-bottom: 1px; }

.drives { display: flex; gap: 4px; padding: 3px 1px 2px; }
.drives button {
  display: flex;
  align-items: center;
  width: 34px;
  height: 22px;
  padding: 1px 0 0 2px;
  gap: 2px;
  border: 1px solid #d0d0d0;
  border-radius: 4px;
  background: #fdfdfd;
}
.drives .on { width: 36px; padding-left: 1px; background: #cce8ff; border-color: #99d1ff; border-radius: 2px; }
.drives svg, .drv { width: 17px; height: 12px; }
.drives .net { height: 16px; }

.inforow { display: flex; align-items: center; height: 27px; padding: 1px 3px 0 1px; }
.combo {
  display: flex;
  align-items: center;
  position: relative;
  width: 55px;
  height: 22px;
  padding-left: 2px;
  border: 1px solid #868686;
  background: #fff;
}
.combo select {
  flex: 1;
  height: 20px;
  padding: 0 0 0 4px;
  border: 0;
  background: none;
  appearance: none;
  font: inherit;
  color: inherit;
}
.chev { position: absolute; right: 3px; top: 8px; width: 10px; height: 6px; pointer-events: none; }
.free { margin-left: 4px; font-size: 14px; }
.minis { display: flex; gap: 2px; margin-left: auto; }
.minis button {
  display: grid;
  place-items: center;
  width: 17px;
  height: 18px;
  border: 1px solid #d0d0d0;
  border-radius: 4px;
  background: #fdfdfd;
}

.tabs {
  display: flex;
  align-items: center;
  justify-content: center;
  gap: 6px;
  height: 23px;
  margin: 0 1px;
  border: solid #e3e3e3;
  border-width: 1px 1px 0;
  background: #f9f9f9;
}

.pathrow { display: flex; align-items: center; height: 18px; padding: 0 3px 0 2px; }
.path {
  flex: 1;
  display: flex;
  align-items: center;
  height: 18px;
  padding: 1px 0 0 3px;
  background: #bfcddb;
}
.path.active { background: #99b4d1; }
.pathrow .minis { padding-left: 1px; }
.tri { width: 9px; height: 5px; margin-right: 3px; }
.minis .tri { margin: 0; }
.star { width: 9px; height: 9px; }

.list {
  flex: 1;
  position: relative;
  margin: 0 2px;
  border-top: 1px solid #a0a0a0;
  background: #000;
}
.list table {
  width: 100%;
  table-layout: fixed;
  border-collapse: collapse;
}
.list th {
  height: 19px;
  padding: 2px 0 0 3px;
  border-bottom: 1px solid #a0a0a0;
  border-right: 1px solid #e3e3e3;
  background: #fff;
  text-align: left;
  line-height: 16px;
}
.list th.sorted { padding-left: 2px; background: #bcdcf4; border-right: 0; }
.list th svg { display: inline-block; width: 7px; height: 9px; margin-right: 2px; vertical-align: 1px; }
.list td { height: 17px; padding: 1px 0 0 2px; line-height: 16px; color: #00e6e6; white-space: nowrap; }
.list td svg { float: left; width: 16px; height: 15px; margin: 0 2px 0 0; }
.list td .up { height: 12px; }
.list .marked td { color: #a800a8; }
.list .log td { color: #ffff40; }
.stem { display: inline-block; width: 116px; }
.mouse { position: absolute; left: 90%; top: 267px; width: 16px; height: 28px; }

.status { display: flex; height: 20px; margin: 0 1px; padding: 1px 0 0 3px; border: 1px solid #e0e0e0; line-height: 17px; }
.status .dir { margin-left: auto; }
.status .date { width: 165px; margin-left: 35px; white-space: nowrap; }

/* vertical bar */
.vbar { display: flex; flex-direction: column; padding: 51px 0 57px; }
.vbar button { flex: 1; position: relative; display: grid; place-items: center; }
.vbar svg { width: 32px; height: 32px; }
.vbar .short { height: 28px; }
.teal { color: #087a88; }
.blue { color: #0a6cd0; }
.drop {
  position: absolute;
  right: 7px;
  bottom: 29px;
  display: grid;
  place-items: center;
  width: 11px;
  height: 10px;
  border: 1px solid #000;
  background: #fff;
  color: #000;
}
.vbar .drop svg { width: 7px; height: 4px; }

/* plugin viewer */
.viewer {
  flex: 1;
  display: flex;
  flex-direction: column;
  justify-content: space-between;
  margin-right: 2px;
  border: 1px solid #6a6a6a;
  background: #fff;
  font-weight: normal;
}
.target { padding: 8px 7px; font: 12px/18px "Open Sans", sans-serif; }
.activate {
  align-self: flex-end;
  width: 319px;
  padding-bottom: 33px;
  color: #b4b4b4;
  font: 15px/22px "Open Sans", "Noto Sans CJK SC", sans-serif;
}
.activate .big { font-size: 21px; line-height: 26px; }

.fkeys { display: flex; gap: 4px; padding: 2px 2px 3px; }
.fkeys button {
  flex: 1;
  height: 20px;
  padding-top: 1px;
  border: 1px solid #d0d0d0;
  border-bottom-color: #bbb;
  border-radius: 4px;
  background: #fdfdfd;
}
```
